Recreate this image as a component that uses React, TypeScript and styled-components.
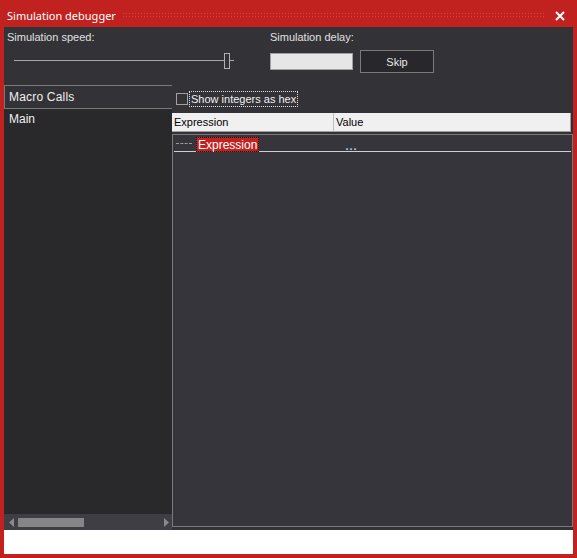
import React from 'react';
import styled, { createGlobalStyle } from 'styled-components';

const Global = createGlobalStyle`
  html, body {
    margin: 0;
    padding: 0;
    background: #ffffff;
  }
  body {
    font-family: "Liberation Sans", Arial, sans-serif;
    font-size: 11px;
  }
`;

const red = '#c2221f';

const Window = styled.div`
  width: 577px;
  height: 558px;
  background: ${red};
  display: flex;
  flex-direction: column;
  box-sizing: border-box;
  padding: 0 4px 4px 4px;
`;

const TitleBar = styled.div`
  height: 27px;
  display: flex;
  align-items: center;
  gap: 6px;
  padding: 4px 3px 0 3px;
  box-sizing: border-box;
  color: #ffffff;
  font-family: "Noto Sans", "Open Sans", sans-serif;
  font-size: 11px;
`;

const Dots = styled.div`
  flex: 1;
  height: 7px;
  background-image: radial-gradient(circle, #d9413d 0.8px, transparent 1px);
  background-size: 3px 3px;
`;

const CloseButton = styled.div`
  width: 16px;
  height: 16px;
  display: flex;
  align-items: center;
  justify-content: center;
  margin-right: 2px;
`;

const Client = styled.div`
  flex: 1;
  display: flex;
  flex-direction: column;
  background: #333237;
  color: #e6e6e6;
`;

const Controls = styled.div`
  height: 58px;
  display: flex;
  padding: 4px 0 0 3px;
  box-sizing: border-box;
`;

const Group = styled.div<{ width: number }>`
  width: ${({ width }) => width}px;
  display: flex;
  flex-direction: column;
`;

const Label = styled.div`
  color: #e0e0e0;
  height: 14px;
`;

const SliderBox = styled.div`
  position: relative;
  margin: 8px 0 0 7px;
  width: 220px;
  height: 16px;
`;

const Track = styled.div`
  position: absolute;
  left: 0;
  right: 0;
  top: 7px;
  height: 1px;
  background: #a8a8a8;
`;

const Thumb = styled.div`
  position: absolute;
  left: 210px;
  top: 0;
  width: 4px;
  height: 14px;
  border: 1px solid #b0b0b0;
  background: #333237;
`;

const DelayRow = styled.div`
  display: flex;
  align-items: center;
  gap: 7px;
  margin-top: 5px;
`;

const DelayInput = styled.div`
  width: 81px;
  height: 15px;
  background: #e6e6e6;
  border: 1px solid #a0a0a0;
`;

const SkipButton = styled.div`
  width: 72px;
  height: 21px;
  background: #28272b;
  border: 1px solid #7a7a7a;
  display: flex;
  align-items: center;
  justify-content: center;
  color: #e6e6e6;
`;

const Main = styled.div`
  flex: 1;
  display: flex;
  min-height: 0;
`;

const LeftPanel = styled.div`
  width: 168px;
  display: flex;
  flex-direction: column;
  background: #29292c;
  border-top: 1px solid #7a7a7a;
`;

const ListHeader = styled.div`
  height: 22px;
  display: flex;
  align-items: center;
  padding-left: 4px;
  border-left: 1px solid #7a7a7a;
  border-bottom: 1px solid #7a7a7a;
  background: #333237;
  color: #f0f0f0;
  font-size: 12px;
  letter-spacing: 0.2px;
`;

const ListItem = styled.div`
  height: 20px;
  display: flex;
  align-items: center;
  padding-left: 5px;
  color: #f0f0f0;
  font-size: 12px;
`;

const ListSpace = styled.div`
  flex: 1;
`;

const HScroll = styled.div`
  height: 16px;
  display: flex;
  align-items: center;
  background: #3e3e44;
  padding: 0 3px 0 5px;
  gap: 4px;
`;

const ScrollThumb = styled.div`
  width: 66px;
  height: 9px;
  background: #868686;
`;

const RightPanel = styled.div`
  flex: 1;
  display: flex;
  flex-direction: column;
  padding-bottom: 3px;
`;

const CheckRow = styled.div`
  height: 28px;
  display: flex;
  align-items: center;
  padding-left: 4px;
  gap: 1px;
`;

const CheckBox = styled.div`
  width: 10px;
  height: 10px;
  border: 1px solid #a0a0a0;
`;

const CheckLabel = styled.div`
  border: 1px dotted #e0e0e0;
  padding: 0 1px;
  height: 14px;
  line-height: 14px;
  color: #f0f0f0;
`;

const GridHeader = styled.div`
  height: 18px;
  display: flex;
  background: #f0f0f0;
  color: #000000;
  margin-right: 2px;
  border-right: 1px solid #a0a0a0;
  border-bottom: 1px solid #a0a0a0;
`;

const HeaderCell = styled.div<{ width?: number }>`
  ${({ width }) => (width ? `width: ${width}px;` : 'flex: 1;')}
  display: flex;
  align-items: center;
  padding-left: 2px;
  box-sizing: border-box;
  border-right: 1px solid #c0c0c0;
  &:last-child {
    border-right: none;
  }
`;

const GridBody = styled.div`
  flex: 1;
  margin-top: 2px;
  border: 1px solid #7a7a7a;
  background: #36353b;
`;

const GridRow = styled.div`
  height: 15px;
  display: flex;
  align-items: center;
  border-bottom: 1px solid #cfcfcf;
  margin: 1px 1px 0 1px;
`;

const TreeLine = styled.div`
  width: 16px;
  margin: 0 4px 0 2px;
  border-top: 1px dashed #9a9a9a;
`;

const Selected = styled.div`
  background: ${red};
  color: #ffffff;
  border: 1px dotted #000000;
  font-size: 12px;
  padding: 0 1px;
  height: 15px;
  line-height: 14px;
  box-sizing: border-box;
  white-space: nowrap;
  align-self: flex-start;
  margin-top: 1px;
`;

const ValueText = styled.div`
  margin-left: 86px;
  margin-top: 4px;
  color: #b8d0ff;
  font-weight: bold;
  letter-spacing: 1px;
`;

const StatusStrip = styled.div`
  height: 24px;
  background: #ffffff;
`;

export default function App() {
  return (
    <>
      <Global />
      <Window>
        <TitleBar>
          <span>Simulation debugger</span>
          <Dots />
          <CloseButton>
            <svg width="10" height="10" viewBox="0 0 10 10">
              <path d="M1 1 L9 9 M9 1 L1 9" stroke="#ffffff" strokeWidth="2" />
            </svg>
          </CloseButton>
        </TitleBar>
        <Client>
          <Controls>
            <Group width={263}>
              <Label>Simulation speed:</Label>
              <SliderBox>
                <Track />
                <Thumb />
              </SliderBox>
            </Group>
            <Group width={200}>
              <Label>Simulation delay:</Label>
              <DelayRow>
                <DelayInput />
                <SkipButton>Skip</SkipButton>
              </DelayRow>
            </Group>
          </Controls>
          <Main>
            <LeftPanel>
              <ListHeader>Macro Calls</ListHeader>
              <ListItem>Main</ListItem>
              <ListSpace />
              <HScroll>
                <svg width="5" height="9" viewBox="0 0 5 9">
                  <path d="M5 0 L0 4.5 L5 9 Z" fill="#8a8a8a" />
                </svg>
                <ScrollThumb />
                <ListSpace />
                <svg width="5" height="9" viewBox="0 0 5 9">
                  <path d="M0 0 L5 4.5 L0 9 Z" fill="#8a8a8a" />
                </svg>
              </HScroll>
            </LeftPanel>
            <RightPanel>
              <CheckRow>
                <CheckBox />
                <CheckLabel>Show integers as hex</CheckLabel>
              </CheckRow>
              <GridHeader>
                <HeaderCell width={162}>Expression</HeaderCell>
                <HeaderCell>Value</HeaderCell>
              </GridHeader>
              <GridBody>
                <GridRow>
                  <TreeLine />
                  <Selected>Expression</Selected>
                  <ValueText>...</ValueText>
                </GridRow>
              </GridBody>
            </RightPanel>
          </Main>
          <StatusStrip />
        </Client>
      </Window>
    </>
  );
}
